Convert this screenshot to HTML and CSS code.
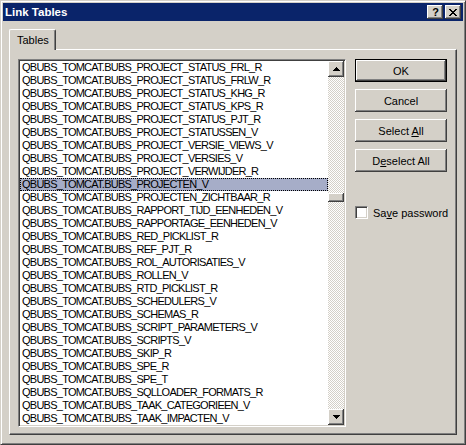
FILE: index.html
```html
<!DOCTYPE html>
<html>
<head>
<meta charset="utf-8">
<link rel="stylesheet" href="styles.css">
</head>
<body>
<div class="window">
  <div class="titlebar">
    <span class="title">Link Tables</span>
    <div class="tb-buttons">
      <span class="tb-btn help">?</span>
      <span class="tb-btn close">
        <svg width="8" height="7" viewBox="0 0 8 7" shape-rendering="crispEdges">
          <path d="M0 0h2v1h-2z M6 0h2v1h-2z M1 1h2v1h-2z M5 1h2v1h-2z M2 2h4v1h-4z M3 3h2v1h-2z M2 4h4v1h-4z M1 5h2v1h-2z M5 5h2v1h-2z M0 6h2v1h-2z M6 6h2v1h-2z" fill="#000"/>
        </svg>
      </span>
    </div>
  </div>
  <div class="body">
    <div class="tabs"><div class="tab">Tables</div></div>
    <div class="panel">
      <div class="listbox">
        <ul class="items">
          <li>QBUBS_TOMCAT.BUBS_PROJECT_STATUS_FRL_R</li>
          <li>QBUBS_TOMCAT.BUBS_PROJECT_STATUS_FRLW_R</li>
          <li>QBUBS_TOMCAT.BUBS_PROJECT_STATUS_KHG_R</li>
          <li>QBUBS_TOMCAT.BUBS_PROJECT_STATUS_KPS_R</li>
          <li>QBUBS_TOMCAT.BUBS_PROJECT_STATUS_PJT_R</li>
          <li>QBUBS_TOMCAT.BUBS_PROJECT_STATUSSEN_V</li>
          <li>QBUBS_TOMCAT.BUBS_PROJECT_VERSIE_VIEWS_V</li>
          <li>QBUBS_TOMCAT.BUBS_PROJECT_VERSIES_V</li>
          <li>QBUBS_TOMCAT.BUBS_PROJECT_VERWIJDER_R</li>
          <li class="selected">QBUBS_TOMCAT.BUBS_PROJECTEN_V</li>
          <li>QBUBS_TOMCAT.BUBS_PROJECTEN_ZICHTBAAR_R</li>
          <li>QBUBS_TOMCAT.BUBS_RAPPORT_TIJD_EENHEDEN_V</li>
          <li>QBUBS_TOMCAT.BUBS_RAPPORTAGE_EENHEDEN_V</li>
          <li>QBUBS_TOMCAT.BUBS_RED_PICKLIST_R</li>
          <li>QBUBS_TOMCAT.BUBS_REF_PJT_R</li>
          <li>QBUBS_TOMCAT.BUBS_ROL_AUTORISATIES_V</li>
          <li>QBUBS_TOMCAT.BUBS_ROLLEN_V</li>
          <li>QBUBS_TOMCAT.BUBS_RTD_PICKLIST_R</li>
          <li>QBUBS_TOMCAT.BUBS_SCHEDULERS_V</li>
          <li>QBUBS_TOMCAT.BUBS_SCHEMAS_R</li>
          <li>QBUBS_TOMCAT.BUBS_SCRIPT_PARAMETERS_V</li>
          <li>QBUBS_TOMCAT.BUBS_SCRIPTS_V</li>
          <li>QBUBS_TOMCAT.BUBS_SKIP_R</li>
          <li>QBUBS_TOMCAT.BUBS_SPE_R</li>
          <li>QBUBS_TOMCAT.BUBS_SPE_T</li>
          <li>QBUBS_TOMCAT.BUBS_SQLLOADER_FORMATS_R</li>
          <li>QBUBS_TOMCAT.BUBS_TAAK_CATEGORIEEN_V</li>
          <li>QBUBS_TOMCAT.BUBS_TAAK_IMPACTEN_V</li>
        </ul>
        <div class="scrollbar">
          <div class="sb-btn">
            <svg width="7" height="4" viewBox="0 0 7 4" shape-rendering="crispEdges"><path d="M3 0h1v1h1v1h1v1h1v1h-7v-1h1v-1h1v-1h1z" fill="#000"/></svg>
          </div>
          <div class="track"><div class="thumb"></div></div>
          <div class="sb-btn">
            <svg width="7" height="4" viewBox="0 0 7 4" shape-rendering="crispEdges"><path d="M0 0h7v1h-1v1h-1v1h-1v1h-1v-1h-1v-1h-1v-1h-1z" fill="#000"/></svg>
          </div>
        </div>
      </div>
      <div class="side">
        <button class="btn default">OK</button>
        <button class="btn">Cancel</button>
        <button class="btn">Select <u>A</u>ll</button>
        <button class="btn">D<u>e</u>select All</button>
        <label class="check"><span class="box"></span><span>Sa<u>v</u>e password</span></label>
      </div>
    </div>
  </div>
</div>
</body>
</html>
```

FILE: styles.css
```css
* { box-sizing: border-box; }
html, body { margin: 0; padding: 0; background: #D4D0C8; }
body {
  font-family: "Liberation Sans", Arial, sans-serif;
  font-size: 11px;
  color: #000;
}
.window {
  width: 466px;
  height: 445px;
  background: #D4D0C8;
  border: 1px solid;
  border-color: #D4D0C8 #404040 #404040 #D4D0C8;
  box-shadow: inset 1px 1px #fff, inset -1px -1px #808080;
  padding: 2px;
  display: flex;
  flex-direction: column;
}
.titlebar {
  height: 18px;
  background: #0A246A;
  display: flex;
  align-items: center;
  justify-content: space-between;
  padding: 0 2px 0 2px;
}
.title {
  color: #fff;
  font-weight: bold;
  font-size: 11.5px;
}
.tb-buttons { display: flex; gap: 2px; }
.tb-btn {
  width: 16px;
  height: 14px;
  background: #D4D0C8;
  box-shadow: inset -1px -1px #404040, inset 1px 1px #fff, inset -2px -2px #808080, inset 2px 2px #D4D0C8;
  display: flex;
  align-items: center;
  justify-content: center;
}
.help {
  font-weight: bold;
  font-size: 11px;
  line-height: 14px;
  padding-left: 1px;
}
.body {
  flex: 1;
  padding: 8px 6px 7px 6px;
  display: flex;
  flex-direction: column;
}
.tabs {
  height: 20px;
  display: flex;
}
.tab {
  position: relative;
  z-index: 1;
  width: 47px;
  height: 21px;
  background: #D4D0C8;
  border-left: 1px solid #fff;
  border-top: 1px solid #fff;
  border-right: 1px solid #404040;
  border-top-left-radius: 2px;
  border-top-right-radius: 2px;
  box-shadow: inset -1px 0 #808080;
  padding: 3px 0 0 7px;
  line-height: 14px;
}
.panel {
  width: 448px;
  height: 386px;
  border-left: 1px solid #fff;
  border-top: 1px solid #fff;
  border-right: 1px solid #404040;
  border-bottom: 1px solid #404040;
  box-shadow: inset -1px -1px #808080;
  padding: 9px 0 0 8px;
  display: flex;
  gap: 9px;
  align-items: flex-start;
}
.listbox {
  width: 328px;
  height: 368px;
  background: #fff;
  border: 1px solid;
  border-color: #808080 #fff #fff #808080;
  box-shadow: inset 1px 1px #404040, inset -1px -1px #D4D0C8;
  padding: 1px;
  display: flex;
}
.items {
  list-style: none;
  margin: 0;
  padding: 0;
  flex: 1;
  overflow: hidden;
}
.items li {
  height: 13px;
  line-height: 13px;
  padding-left: 2px;
  font-size: 11px;
  letter-spacing: -0.75px;
  white-space: nowrap;
}
.items li.selected {
  background: #A6ADC8;
  outline: 1px dotted #000;
  outline-offset: -1px;
}
.scrollbar {
  width: 16px;
  display: flex;
  flex-direction: column;
}
.sb-btn {
  width: 16px;
  height: 16px;
  background: #D4D0C8;
  box-shadow: inset -1px -1px #404040, inset 1px 1px #fff, inset -2px -2px #808080, inset 2px 2px #D4D0C8;
  display: flex;
  align-items: center;
  justify-content: center;
}
.track {
  flex: 1;
  background: repeating-conic-gradient(#D4D0C8 0 25%, #fff 0 50%) 0 0 / 2px 2px;
}
.thumb {
  margin-top: 116px;
  height: 9px;
  background: #D4D0C8;
  box-shadow: inset -1px -1px #404040, inset 1px 1px #fff, inset -2px -2px #808080;
}
.side {
  width: 92px;
  display: flex;
  flex-direction: column;
  gap: 7px;
}
.btn {
  width: 92px;
  height: 23px;
  margin: 0;
  padding: 0;
  border: none;
  background: #D4D0C8;
  font-family: "Liberation Sans", Arial, sans-serif;
  font-size: 11px;
  color: #000;
  box-shadow: inset -1px -1px #404040, inset 1px 1px #fff, inset -2px -2px #808080, inset 2px 2px #D4D0C8;
}
.btn.default {
  border: 1px solid #000;
  box-shadow: inset -1px -1px #404040, inset 1px 1px #fff, inset -2px -2px #808080;
}
.check {
  margin-top: 27px;
  display: flex;
  align-items: center;
  gap: 5px;
  white-space: nowrap;
  height: 13px;
}
.box {
  width: 13px;
  height: 13px;
  flex: none;
  background: #fff;
  border: 1px solid;
  border-color: #808080 #fff #fff #808080;
  box-shadow: inset 1px 1px #404040, inset -1px -1px #D4D0C8;
}
```
